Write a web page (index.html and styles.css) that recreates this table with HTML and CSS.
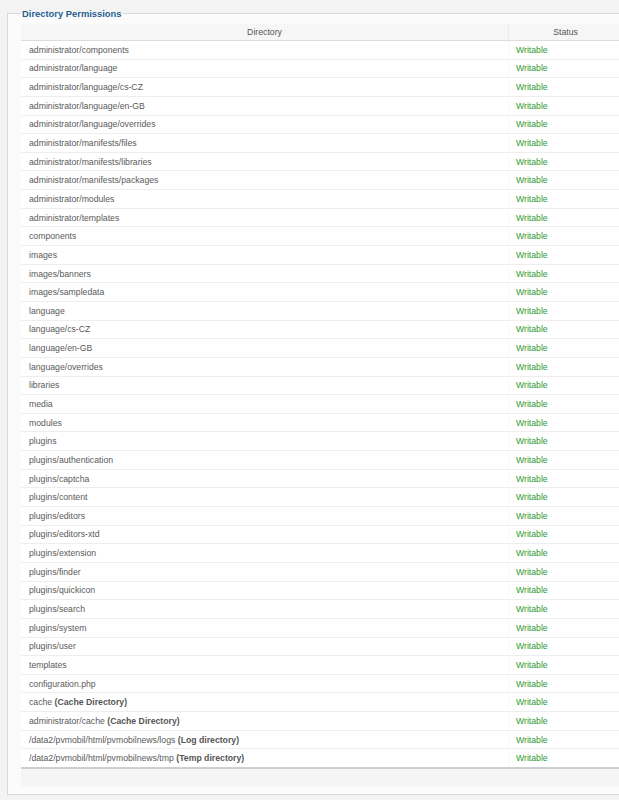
FILE: index.html
```html
<!DOCTYPE html>
<html lang="en">
<head>
    <meta charset="UTF-8">
    <meta name="viewport" content="width=device-width, initial-scale=1.0">
    <title>Directory Permissions</title>
    <link rel="stylesheet" href="styles.css">
</head>
<body>
    <fieldset class="adminform">
        <legend>Directory Permissions</legend>
        <table class="perms">
            <thead>
                <tr><th class="dir">Directory</th><th class="status">Status</th></tr>
            </thead>
            <tbody>
                <tr><td>administrator/components</td><td class="ok">Writable</td></tr>
                <tr><td>administrator/language</td><td class="ok">Writable</td></tr>
                <tr><td>administrator/language/cs-CZ</td><td class="ok">Writable</td></tr>
                <tr><td>administrator/language/en-GB</td><td class="ok">Writable</td></tr>
                <tr><td>administrator/language/overrides</td><td class="ok">Writable</td></tr>
                <tr><td>administrator/manifests/files</td><td class="ok">Writable</td></tr>
                <tr><td>administrator/manifests/libraries</td><td class="ok">Writable</td></tr>
                <tr><td>administrator/manifests/packages</td><td class="ok">Writable</td></tr>
                <tr><td>administrator/modules</td><td class="ok">Writable</td></tr>
                <tr><td>administrator/templates</td><td class="ok">Writable</td></tr>
                <tr><td>components</td><td class="ok">Writable</td></tr>
                <tr><td>images</td><td class="ok">Writable</td></tr>
                <tr><td>images/banners</td><td class="ok">Writable</td></tr>
                <tr><td>images/sampledata</td><td class="ok">Writable</td></tr>
                <tr><td>language</td><td class="ok">Writable</td></tr>
                <tr><td>language/cs-CZ</td><td class="ok">Writable</td></tr>
                <tr><td>language/en-GB</td><td class="ok">Writable</td></tr>
                <tr><td>language/overrides</td><td class="ok">Writable</td></tr>
                <tr><td>libraries</td><td class="ok">Writable</td></tr>
                <tr><td>media</td><td class="ok">Writable</td></tr>
                <tr><td>modules</td><td class="ok">Writable</td></tr>
                <tr><td>plugins</td><td class="ok">Writable</td></tr>
                <tr><td>plugins/authentication</td><td class="ok">Writable</td></tr>
                <tr><td>plugins/captcha</td><td class="ok">Writable</td></tr>
                <tr><td>plugins/content</td><td class="ok">Writable</td></tr>
                <tr><td>plugins/editors</td><td class="ok">Writable</td></tr>
                <tr><td>plugins/editors-xtd</td><td class="ok">Writable</td></tr>
                <tr><td>plugins/extension</td><td class="ok">Writable</td></tr>
                <tr><td>plugins/finder</td><td class="ok">Writable</td></tr>
                <tr><td>plugins/quickicon</td><td class="ok">Writable</td></tr>
                <tr><td>plugins/search</td><td class="ok">Writable</td></tr>
                <tr><td>plugins/system</td><td class="ok">Writable</td></tr>
                <tr><td>plugins/user</td><td class="ok">Writable</td></tr>
                <tr><td>templates</td><td class="ok">Writable</td></tr>
                <tr><td>configuration.php</td><td class="ok">Writable</td></tr>
                <tr><td>cache <b>(Cache Directory)</b></td><td class="ok">Writable</td></tr>
                <tr><td>administrator/cache <b>(Cache Directory)</b></td><td class="ok">Writable</td></tr>
                <tr><td>/data2/pvmobil/html/pvmobilnews/logs <b>(Log directory)</b></td><td class="ok">Writable</td></tr>
                <tr><td>/data2/pvmobil/html/pvmobilnews/tmp <b>(Temp directory)</b></td><td class="ok">Writable</td></tr>
            </tbody>
            <tfoot>
                <tr><td colspan="2">&nbsp;</td></tr>
            </tfoot>
        </table>
    </fieldset>
</body>
</html>
```
FILE: styles.css
```css
html, body {
    overflow: hidden;
}

body {
    margin: 0;
    background-color: #f3f3f3;
    font-family: "Liberation Sans", Arial, sans-serif;
    font-size: 8.7px;
    color: #5a5a5a;
}

.adminform {
    margin: 8px 0 0 7px;
    width: 640px;
    padding: 5px 0 8px 13px;
    border: 1px solid #d8d8d8;
    background-color: #fbfbfb;
}

.adminform legend {
    padding: 0 1px;
    margin-left: 0;
    color: #1f5f8f;
    font-weight: bold;
    font-size: 9.4px;
}

.perms {
    width: 601px;
    border-collapse: collapse;
    background-color: #fff;
}

.perms th {
    height: 16px;
    padding: 0 6px;
    background-color: #f6f6f6;
    border-bottom: 1px solid #dcdcdc;
    font-weight: normal;
    color: #555;
    text-align: center;
}

.perms th.status {
    width: 101px;
    border-left: 1px solid #ececec;
}

.perms td {
    height: 17.65px;
    padding: 0 8px;
    border-top: 1px solid #eeeeee;
    white-space: nowrap;
}

.perms tbody tr:first-child td {
    border-top: none;
}

.perms td.ok {
    padding-left: 7px;
    color: #2e9a2e;
    border-left: 1px solid #f6f6f6;
}

.perms td b {
    color: #555;
}

.perms tbody tr:last-child td {
    border-bottom: 2px solid #cfcfcf;
}

.perms tfoot td {
    height: 17px;
    background-color: #f5f5f5;
    border-top: none;
}
```
